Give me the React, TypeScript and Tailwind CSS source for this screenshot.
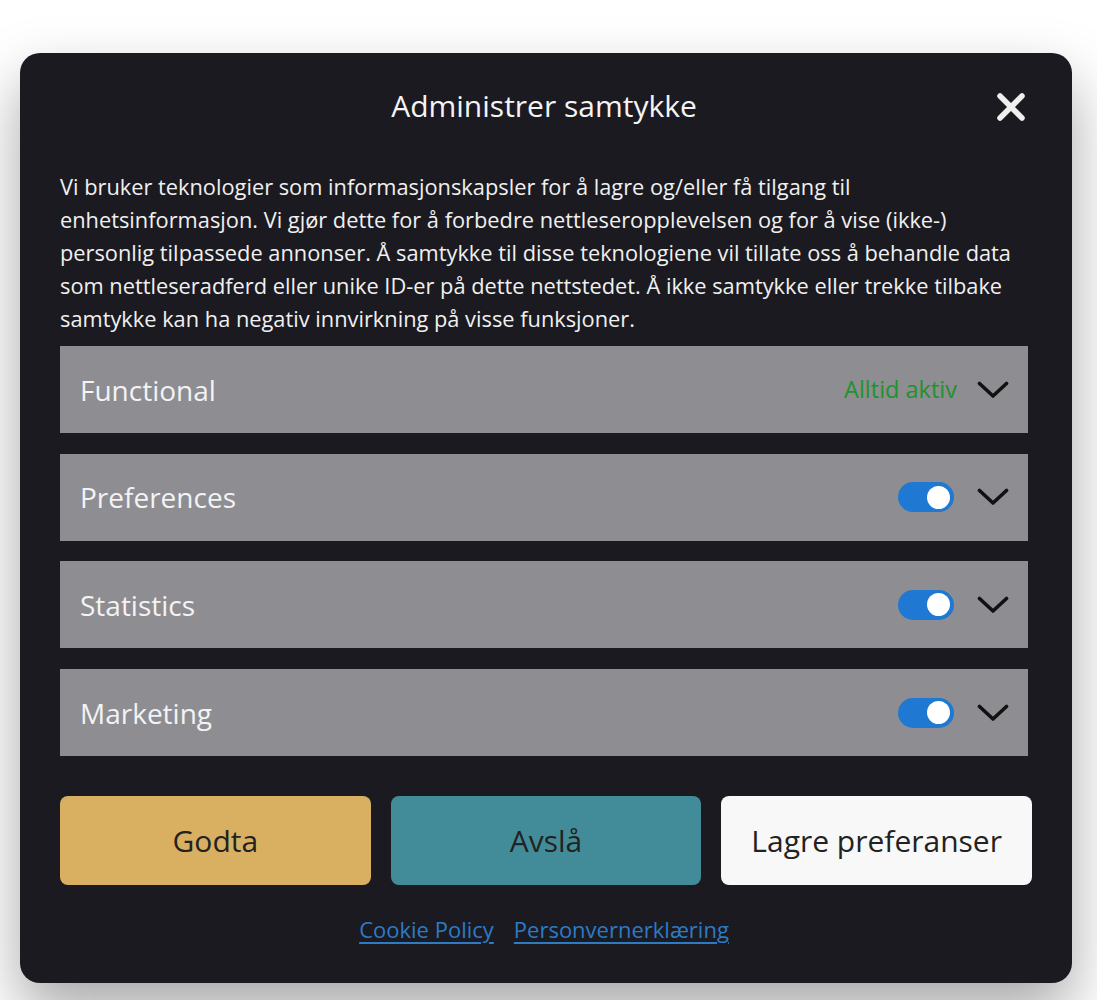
import React from "react";

const Chevron = () => (
  <svg width="32" height="18" viewBox="0 0 32 18" fill="none">
    <path d="M2.5 2.5 L16 15 L29.5 2.5" stroke="#111" strokeWidth="3.6" strokeLinecap="round" strokeLinejoin="round" />
  </svg>
);

const Toggle = () => (
  <div className="w-[56px] h-[30px] rounded-full bg-[#1f78d1] flex items-center justify-end pr-[4px]">
    <div className="w-[23px] h-[23px] rounded-full bg-white" />
  </div>
);

const Row = ({ label, always }: { label: string; always?: boolean }) => (
  <div className="h-[87px] bg-[#8e8d92] flex items-center pl-[20px] pr-[19px]">
    <span className="text-[28px] text-[#f3f3f3] flex-1">{label}</span>
    {always ? (
      <span className="text-[23.5px] text-[#20932a] mr-[20px]">Alltid aktiv</span>
    ) : (
      <div className="mr-[23px]">
        <Toggle />
      </div>
    )}
    <Chevron />
  </div>
);

export default function App() {
  return (
    <div className="min-h-[1000px] bg-white pt-[53px] pl-[20px]" style={{ fontFamily: '"Open Sans", "Noto Sans", sans-serif' }}>
      <div className="w-[1052px] h-[930px] bg-[#1b1a21] rounded-[20px] shadow-[0_28px_60px_rgba(0,0,0,0.35)] pl-[40px] pr-[44px] pt-[33px]">
        <div className="relative flex items-center justify-center h-[40px]">
          <h1 className="text-[30px] text-[#f4f4f4] leading-[40px]">Administrer samtykke</h1>
          <svg className="absolute right-[2px] top-[6px]" width="30" height="30" viewBox="0 0 30 30" fill="none">
            <path d="M4 4 L26 26 M26 4 L4 26" stroke="#efefef" strokeWidth="5.5" strokeLinecap="round" />
          </svg>
        </div>
        <p className="mt-[44px] text-[21.8px] leading-[33px] text-[#f0f0f0]">
          Vi bruker teknologier som informasjonskapsler for å lagre og/eller få tilgang til enhetsinformasjon. Vi gjør dette for å forbedre nettleseropplevelsen og for å vise (ikke-) personlig tilpassede annonser. Å samtykke til disse teknologiene vil tillate oss å behandle data som nettleseradferd eller unike ID-er på dette nettstedet. Å ikke samtykke eller trekke tilbake samtykke kan ha negativ innvirkning på visse funksjoner.
        </p>
        <div className="mt-[11px] flex flex-col gap-[20.7px]">
          <Row label="Functional" always />
          <Row label="Preferences" />
          <Row label="Statistics" />
          <Row label="Marketing" />
        </div>
        <div className="mt-[40px] mr-[-4px] grid grid-cols-3 gap-[20px]">
          <button className="h-[89px] rounded-[8px] bg-[#d9b062] text-[30px] text-[#222]">Godta</button>
          <button className="h-[89px] rounded-[8px] bg-[#428c99] text-[30px] text-[#222]">Avslå</button>
          <button className="h-[89px] rounded-[8px] bg-[#f8f8f8] text-[30px] text-[#222]">Lagre preferanser</button>
        </div>
        <div className="mt-[28px] flex justify-center gap-[20px] text-[22px] leading-[32px]">
          <a href="#" className="text-[#2c7bc6] underline underline-offset-[4px]">Cookie Policy</a>
          <a href="#" className="text-[#2c7bc6] underline underline-offset-[4px]">Personvernerklæring</a>
        </div>
      </div>
    </div>
  );
}
